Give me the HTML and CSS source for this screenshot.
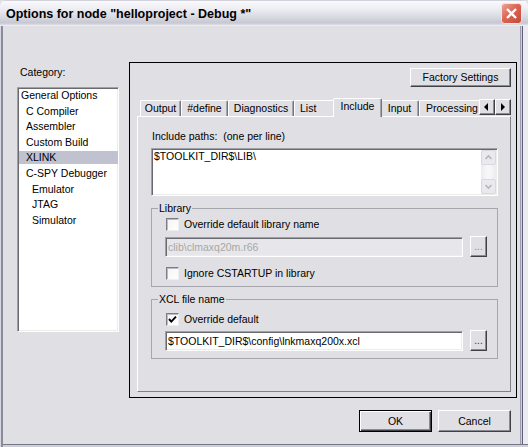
FILE: index.html
```html
<!DOCTYPE html>
<html>
<head>
<meta charset="utf-8">
<title>Options</title>
<link rel="stylesheet" href="styles.css">
</head>
<body>
<div class="window">
  <div class="titlebar">
    <span class="title">Options for node "helloproject - Debug *"</span>
    <span class="close">
      <svg width="21" height="21" viewBox="0 0 21 21">
        <defs>
          <linearGradient id="cg" x1="0" y1="0" x2="1" y2="1">
            <stop offset="0" stop-color="#f0a899"/>
            <stop offset="0.45" stop-color="#dc6653"/>
            <stop offset="1" stop-color="#c24a37"/>
          </linearGradient>
        </defs>
        <rect x="0.5" y="0.5" width="20" height="20" rx="3" fill="url(#cg)" stroke="#f6e4e0"/>
        <path d="M6 6 L15 15 M15 6 L6 15" stroke="#fff" stroke-width="2.4"/>
      </svg>
    </span>
  </div>
  <div class="frame">
    <div class="client">
      <div class="main">
        <div class="category">
          <div class="cat-label">Category:</div>
          <div class="listbox">
            <div class="item l0">General Options</div>
            <div class="item l1">C Compiler</div>
            <div class="item l1">Assembler</div>
            <div class="item l1">Custom Build</div>
            <div class="item l1 sel">XLINK</div>
            <div class="item l1">C-SPY Debugger</div>
            <div class="item l2">Emulator</div>
            <div class="item l2">JTAG</div>
            <div class="item l2">Simulator</div>
          </div>
        </div>
        <div class="panel">
          <div class="factory-row"><div class="btn factory">Factory Settings</div></div>
          <div class="tabrow">
            <div class="tabs">
              <div class="tab t-output">Output</div>
              <div class="tab t-define">#define</div>
              <div class="tab t-diag">Diagnostics</div>
              <div class="tab t-list">List</div>
              <div class="tab t-include active">Include</div>
              <div class="tab t-input">Input</div>
              <div class="tab t-proc">Processing</div>
            </div>
            <div class="tab-scroll">
              <div class="arrow-btn"><svg width="14" height="14" viewBox="0 0 14 14"><polygon points="8,3 8,11 4,7" fill="#000"/></svg></div>
              <div class="arrow-btn"><svg width="14" height="14" viewBox="0 0 14 14"><polygon points="5,3 5,11 9,7" fill="#000"/></svg></div>
            </div>
          </div>
          <div class="tabpage">
            <div class="inc-label">Include paths:&nbsp; (one per line)</div>
            <div class="textbox">
              <div class="tb-text">$TOOLKIT_DIR$\LIB\</div>
              <div class="vscroll">
                <div class="sb-btn"><svg width="13" height="13" viewBox="0 0 13 13"><polyline points="3.5,8 6.5,5 9.5,8" fill="none" stroke="#b6b6c0" stroke-width="1.6"/></svg></div>
                <div class="sb-track"></div>
                <div class="sb-btn"><svg width="13" height="13" viewBox="0 0 13 13"><polyline points="3.5,5 6.5,8 9.5,5" fill="none" stroke="#b6b6c0" stroke-width="1.6"/></svg></div>
              </div>
            </div>
            <fieldset class="group lib">
              <legend>Library</legend>
              <div class="row cb-row mt3">
                <span class="cb"></span><span class="cb-label">Override default library name</span>
              </div>
              <div class="row input-row mt5">
                <div class="input disabled">clib\clmaxq20m.r66</div>
                <div class="btn dots dim">...</div>
              </div>
              <div class="row cb-row mt10">
                <span class="cb"></span><span class="cb-label">Ignore CSTARTUP in library</span>
              </div>
            </fieldset>
            <fieldset class="group xcl">
              <legend>XCL file name</legend>
              <div class="row cb-row mt7">
                <span class="cb"><svg width="11" height="11" viewBox="0 0 11 11"><polyline points="2,5 4.3,7.6 9,2.6" fill="none" stroke="#000" stroke-width="1.9"/></svg></span><span class="cb-label">Override default</span>
              </div>
              <div class="row input-row mt4">
                <div class="input">$TOOLKIT_DIR$\config\lnkmaxq200x.xcl</div>
                <div class="btn dots">...</div>
              </div>
            </fieldset>
          </div>
        </div>
      </div>
      <div class="buttons">
        <div class="btn dlg ok">OK</div>
        <div class="btn dlg">Cancel</div>
      </div>
    </div>
  </div>
</div>
</body>
</html>
```
FILE: styles.css
```css
* { box-sizing: border-box; }
html, body { margin: 0; padding: 0; }
body {
  width: 528px;
  height: 447px;
  overflow: hidden;
  background: #ffffff;
  font-family: "Liberation Sans", Arial, sans-serif;
  font-size: 10.5px;
  line-height: 13px;
  color: #000;
}
.window {
  width: 528px;
  height: 447px;
  display: flex;
  flex-direction: column;
  background: #e0dfe3;
}
.titlebar {
  height: 26px;
  flex: none;
  display: flex;
  align-items: center;
  padding: 0 6px;
  border-radius: 6px 6px 0 0;
  background: linear-gradient(#a9a9ba 0, #fafafc 1px, #efeff4 30%, #dadae3 65%, #c7c7d3 88%, #d8d8e0 94%, #f4f4f7 100%);
}
.title {
  flex: 1;
  font-size: 12.5px;
  font-weight: bold;
  line-height: 26px;
  padding-top: 1px;
  white-space: nowrap;
}
.close { width: 21px; height: 21px; display: block; }
.close svg { display: block; }

.frame {
  flex: 1;
  display: flex;
  padding: 0 8px 3px 3px;
  box-shadow:
    inset 1px 0 0 #d6d6de,
    inset 3px 0 0 #8b8b9e,
    inset 0 -2px 0 #cfcfd8,
    inset 0 -3px 0 #77778a,
    inset -5px 0 0 #ececf0,
    inset -6px 0 0 #5d5d7c,
    inset -7px 0 0 #d0d0d8,
    inset -8px 0 0 #9c9cac;
}
.client {
  flex: 1;
  display: flex;
  flex-direction: column;
}
.main {
  display: flex;
  gap: 10px;
  padding: 36px 3px 0 14px;
}
.category { width: 102px; flex: none; }
.cat-label { margin: 4px 0 0 3px; }
.listbox {
  margin-top: 8px;
  height: 245px;
  background: #fff;
  border: 1px solid;
  border-color: #a0a0a8 #ffffff #ffffff #a0a0a8;
  box-shadow: inset 1px 1px 0 #696970, inset -1px -1px 0 #ecece8;
  padding-top: 1px;
  display: flex;
  flex-direction: column;
  gap: 2.6px;
}
.item { height: 13px; flex: none; white-space: nowrap; }
.l0 { padding-left: 3px; }
.l1 { padding-left: 8px; }
.l2 { padding-left: 14px; }
.sel { background: linear-gradient(to right, transparent 1px, #c1c2cf 1px); }

.panel {
  width: 388px;
  height: 336px;
  flex: none;
  border: 1px solid #000;
  display: flex;
  flex-direction: column;
  padding: 5px 5px 0 7px;
}
.factory-row { display: flex; justify-content: flex-end; }
.btn {
  display: flex;
  align-items: center;
  justify-content: center;
  background: #e0dfe3;
  border: 1px solid;
  border-color: #ffffff #404048 #404048 #ffffff;
  box-shadow: inset -1px -1px 0 #8a8a92;
  white-space: nowrap;
}
.factory { width: 101px; height: 19px; }

.tabrow { margin-top: 11px; height: 19px; display: flex; flex: none; }
.tabs {
  flex: 1;
  min-width: 0;
  display: flex;
  align-items: flex-end;
  overflow: hidden;
  padding-left: 3px;
}
.tab {
  flex: none;
  height: 17px;
  border: 1px solid;
  border-bottom: none;
  border-color: #ffffff #74747e transparent #ffffff;
  border-radius: 2px 2px 0 0;
  box-shadow: inset -1px 0 0 #a6a6ae;
  display: flex;
  align-items: center;
  justify-content: center;
  padding-bottom: 1px;
  white-space: nowrap;
}
.tab.active {
  height: 19px;
  margin: 0 -2px;
  position: relative;
  z-index: 1;
  background: #e0dfe3;
  padding-bottom: 3px;
}
.t-output { width: 41px; }
.t-define { width: 47px; }
.t-diag { width: 66px; }
.t-list { width: 41px; justify-content: flex-start; padding-left: 5px; }
.t-include { width: 49px; }
.t-input { width: 39px; }
.t-proc { width: 66px; }
.tab-scroll { display: flex; padding-top: 1px; flex: none; }
.arrow-btn {
  width: 16px;
  height: 16px;
  background: #e0dfe3;
  border: 1px solid;
  border-color: #ffffff #404048 #404048 #ffffff;
  box-shadow: inset -1px -1px 0 #8a8a92;
}
.arrow-btn svg { display: block; }

.tabpage {
  margin-top: -1px;
  height: 276px;
  flex: none;
  border: 1px solid;
  border-color: #ffffff #808088 #808088 #ffffff;
  padding: 13px 12px 0 13px;
}
.inc-label { margin-left: 1px; white-space: nowrap; }
.textbox {
  margin-top: 5px;
  height: 48px;
  display: flex;
  background: #fff;
  border: 1px solid;
  border-color: #a0a0a8 #ffffff #ffffff #a0a0a8;
  box-shadow: inset 1px 1px 0 #696970, inset -1px -1px 0 #ecece8;
  padding: 1px;
}
.tb-text { flex: 1; padding-left: 1px; }
.vscroll {
  width: 15px;
  display: flex;
  flex-direction: column;
  background: #f2f2f5;
}
.sb-btn {
  height: 15px;
  flex: none;
  background: #e9e9ee;
  border: 1px solid #d8d8e0;
  border-radius: 2px;
}
.sb-btn svg { display: block; }
.sb-track {
  flex: 1;
  background: linear-gradient(to right, #ececf0, #f7f7f9 40%, #f7f7f9 60%, #ececf0);
}

.group {
  margin: 6px 0 0;
  padding: 0;
  min-width: 0;
  border: 1px solid #a6a6ae;
}
.group legend {
  padding: 0 1px;
  margin-left: 6px;
  line-height: 13px;
}
.lib { padding-bottom: 6px; }
.xcl { padding-bottom: 7px; }
.row {
  display: flex;
  align-items: center;
  padding: 0 10px 0 13px;
}
.cb-row { height: 13px; }
.input-row { height: 21px; gap: 7px; }
.mt3 { margin-top: 3px; }
.mt4 { margin-top: 4px; }
.mt5 { margin-top: 5px; }
.mt7 { margin-top: 7px; }
.mt10 { margin-top: 10px; }
.cb {
  width: 13px;
  height: 13px;
  flex: none;
  margin-left: 1px;
  background: linear-gradient(135deg, #f4f4f6, #ffffff);
  border: 1px solid;
  border-color: #7c7c84 #eeeef0 #eeeef0 #7c7c84;
  box-shadow: inset 1px 1px 0 #bcbcc4;
}
.cb svg { display: block; }
.cb-label { margin-left: 5px; white-space: nowrap; }
.input {
  flex: 1;
  height: 20px;
  background: #fff;
  border: 1px solid;
  border-color: #a0a0a8 #ffffff #ffffff #a0a0a8;
  box-shadow: inset 1px 1px 0 #696970, inset -1px -1px 0 #ecece8;
  padding: 3px 0 0 2px;
  white-space: nowrap;
  overflow: hidden;
}
.input.disabled { background: #e7e6ea; color: #a8a8a4; }
.dots {
  width: 17px;
  height: 21px;
  flex: none;
  align-items: flex-end;
  padding-bottom: 4px;
  line-height: 10px;
  font-size: 10px;
  color: #333;
}
.dots.dim { color: #8a8a8a; }

.buttons {
  display: flex;
  justify-content: flex-end;
  gap: 6px;
  padding-right: 9px;
  margin-top: 12px;
}
.dlg { width: 73px; height: 22px; }
.ok {
  border-color: #000;
  box-shadow: inset 1px 1px 0 #fff, inset -1px -1px 0 #404048, inset -2px -2px 0 #8a8a92;
}
```
